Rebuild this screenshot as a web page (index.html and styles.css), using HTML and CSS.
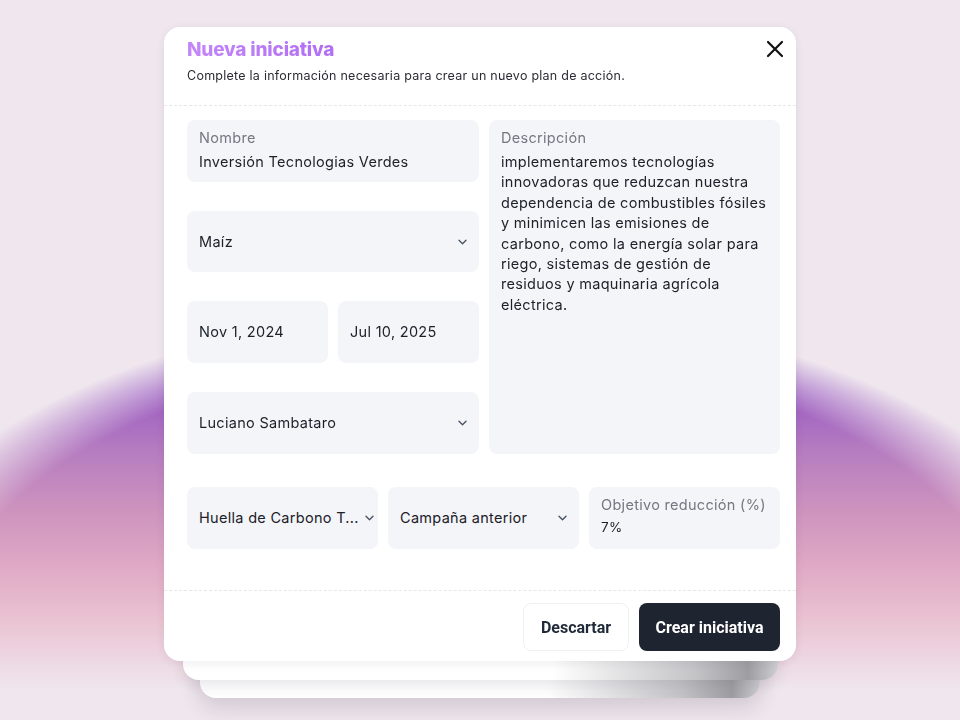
FILE: index.html
```html
<!DOCTYPE html>
<html lang="es">
<head>
<meta charset="utf-8">
<title>Nueva iniciativa</title>
<link rel="stylesheet" href="styles.css">
</head>
<body>
<div class="backdrop"></div>
<main class="stage">
  <div class="stack">
    <section class="modal">
      <header class="modal-head">
        <div class="head-text">
          <h1 class="title">Nueva iniciativa</h1>
          <p class="subtitle">Complete la información necesaria para crear un nuevo plan de acción.</p>
        </div>
        <button class="close" aria-label="Cerrar">
          <svg width="18" height="18" viewBox="0 0 18 18"><path d="M2 2L16 16M16 2L2 16" stroke="#111" stroke-width="2.2" stroke-linecap="round"/></svg>
        </button>
      </header>
      <div class="modal-body">
        <div class="grid">
          <div class="field text-field">
            <span class="label">Nombre</span>
            <span class="value">Inversión Tecnologias Verdes</span>
          </div>
          <div class="field desc">
            <span class="label">Descripción</span>
            <p class="desc-text">implementaremos tecnologías<br>innovadoras que reduzcan nuestra<br>dependencia de combustibles fósiles<br>y minimicen las emisiones de<br>carbono, como la energía solar para<br>riego, sistemas de gestión de<br>residuos y maquinaria agrícola<br>eléctrica.</p>
          </div>
          <div class="field select">
            <span class="value">Maíz</span>
            <svg class="chev" width="9" height="6" viewBox="0 0 9 6"><path d="M1 1.2l3.5 3.5 3.5-3.5" fill="none" stroke="#4b5563" stroke-width="1.4" stroke-linecap="round" stroke-linejoin="round"/></svg>
          </div>
          <div class="dates">
            <div class="field select"><span class="value">Nov 1, 2024</span></div>
            <div class="field select"><span class="value">Jul 10, 2025</span></div>
          </div>
          <div class="field select">
            <span class="value">Luciano Sambataro</span>
            <svg class="chev" width="9" height="6" viewBox="0 0 9 6"><path d="M1 1.2l3.5 3.5 3.5-3.5" fill="none" stroke="#4b5563" stroke-width="1.4" stroke-linecap="round" stroke-linejoin="round"/></svg>
          </div>
        </div>
        <div class="row3">
          <div class="field select">
            <span class="value">Huella de Carbono T...</span>
            <svg class="chev" width="9" height="6" viewBox="0 0 9 6"><path d="M1 1.2l3.5 3.5 3.5-3.5" fill="none" stroke="#4b5563" stroke-width="1.4" stroke-linecap="round" stroke-linejoin="round"/></svg>
          </div>
          <div class="field select">
            <span class="value">Campaña anterior</span>
            <svg class="chev" width="9" height="6" viewBox="0 0 9 6"><path d="M1 1.2l3.5 3.5 3.5-3.5" fill="none" stroke="#4b5563" stroke-width="1.4" stroke-linecap="round" stroke-linejoin="round"/></svg>
          </div>
          <div class="field text-field small">
            <span class="label">Objetivo reducción (%)</span>
            <span class="value">7%</span>
          </div>
        </div>
      </div>
      <footer class="modal-foot">
        <button class="btn ghost">Descartar</button>
        <button class="btn primary">Crear iniciativa</button>
      </footer>
    </section>
  </div>
</main>
</body>
</html>
```

FILE: styles.css
```css
* { box-sizing: border-box; }
html, body { margin: 0; height: 100%; }
body {
  background: #efe6ee;
  font-family: "Inter", "Noto Sans", sans-serif;
  color: #1f2937;
  overflow: hidden;
  position: relative;
}
.backdrop {
  position: fixed;
  inset: 0;
  background: linear-gradient(180deg,
    #8a4fc4 0px, #8a4fc4 330px, #9a5cc2 390px, #b57cc0 450px,
    #cf95be 515px, #e0abc6 570px, #eac3d2 620px, #efe6ee 690px);
  -webkit-mask-image: radial-gradient(ellipse 620px 330px at 480px 640px, #000 86%, transparent 100%);
  mask-image: radial-gradient(ellipse 620px 330px at 480px 640px, #000 86%, transparent 100%);
}
.stage {
  position: relative;
  padding: 27px 0 0 164px;
}
.stack {
  position: relative;
  width: 632px;
}
.stack::before, .stack::after {
  content: "";
  position: absolute;
  border-radius: 16px;
  background: linear-gradient(90deg, #ffffff 0%, #ffffff 62%, #c4c4c7 86%, #9e9ea2 95%, #cfcfd2 100%);
  box-shadow: 0 6px 14px rgba(60, 50, 70, 0.12);
}
.stack::before {
  left: 19px; right: 18px; top: 40px; bottom: -19px;
  z-index: 1;
}
.stack::after {
  left: 36px; right: 36px; top: 60px; bottom: -37px;
  z-index: 0;
  box-shadow: 0 10px 20px rgba(60, 50, 70, 0.16);
}
.modal {
  position: relative;
  z-index: 2;
  background: #fff;
  border-radius: 16px;
  height: 634px;
  display: flex;
  flex-direction: column;
  box-shadow: 0 2px 10px rgba(40, 30, 50, 0.08);
}
.modal-head {
  display: flex;
  justify-content: space-between;
  align-items: flex-start;
  padding: 11px 12px 21px 23px;
  border-bottom: 1px dashed #e6e7ea;
}
.title {
  margin: 0;
  font-size: 19px;
  line-height: 24px;
  font-weight: 800;
  letter-spacing: -0.2px;
  background: linear-gradient(90deg, #c487fa 0%, #a45ef0 55%, #9244e6 100%);
  -webkit-background-clip: text;
  background-clip: text;
  color: transparent;
}
.subtitle {
  margin: 6px 0 0;
  font-size: 12.5px;
  line-height: 16px;
  letter-spacing: 0.25px;
  color: #2b2b33;
}
.close {
  border: 0;
  background: none;
  padding: 0;
  margin-top: 2px;
  width: 18px;
  height: 18px;
  cursor: pointer;
}
.modal-body {
  padding: 14px 16px 0 23px;
  flex: 1;
  border-bottom: 1px dashed #e6e7ea;
}
.grid {
  display: grid;
  grid-template-columns: 292px 291px;
  grid-template-rows: 62px 61px 62px 62px;
  column-gap: 10px;
  row-gap: 29px;
}
.field {
  background: #f4f5f8;
  border-radius: 8px;
  font-size: 14.5px;
  letter-spacing: 0.3px;
  line-height: 20px;
  min-width: 0;
}
.text-field {
  display: flex;
  flex-direction: column;
  padding: 8px 12px 10px;
}
.label {
  color: #737883;
  font-size: 14.5px;
  line-height: 20px;
  margin-bottom: 4px;
}
.value {
  color: #1b2029;
  white-space: nowrap;
}
.select {
  display: flex;
  align-items: center;
  justify-content: space-between;
  padding: 0 12px;
}
.chev { flex: none; margin-left: 6px; }
.desc {
  grid-column: 2;
  grid-row: 1 / 5;
  padding: 8px 12px 10px;
  display: flex;
  flex-direction: column;
}
.desc-text {
  margin: 0;
  font-size: 14.5px;
  line-height: 20.4px;
  white-space: nowrap;
  color: #1b2029;
}
.dates {
  display: grid;
  grid-template-columns: 141px 141px;
  gap: 10px;
}
.row3 {
  margin-top: 33px;
  display: grid;
  grid-template-columns: 191px 191px 191px;
  column-gap: 10px;
  height: 62px;
}
.small .label { margin-bottom: 2px; }
.small .value { font-size: 13.5px; }
.modal-foot {
  display: flex;
  justify-content: flex-end;
  gap: 10px;
  padding: 12px 16px 10px;
}
.btn {
  height: 48px;
  border-radius: 8px;
  font-family: "Roboto", "Liberation Sans", sans-serif;
  font-weight: 700;
  font-size: 16px;
  cursor: pointer;
}
.ghost {
  width: 106px;
  background: #fff;
  border: 1px solid #eef0f3;
  color: #1f2937;
}
.primary {
  width: 141px;
  background: #1e2430;
  border: 0;
  color: #fff;
}
```
